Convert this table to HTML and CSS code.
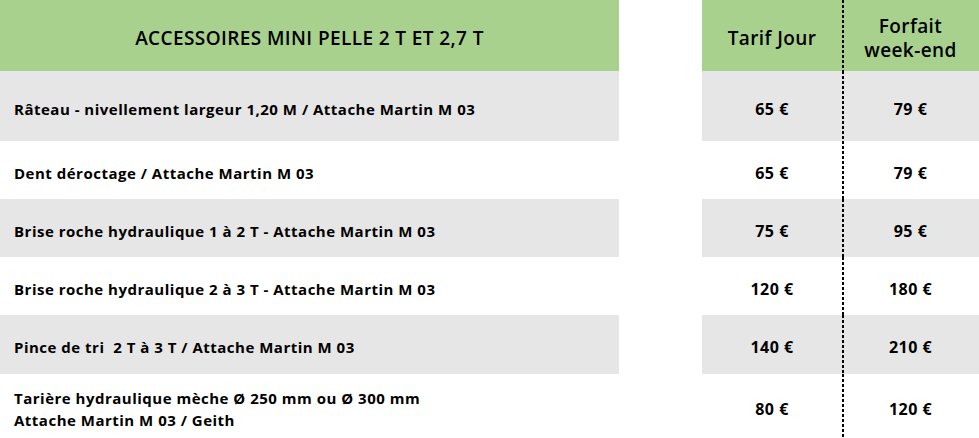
FILE: index.html
```html
<!DOCTYPE html>
<html lang="fr">
<head>
<meta charset="utf-8">
<title>Accessoires mini pelle</title>
<link rel="stylesheet" href="styles.css">
</head>
<body>
<div class="table">
  <div class="row head">
    <div class="cell name title">ACCESSOIRES MINI PELLE 2 T ET 2,7 T</div>
    <div class="spacer"></div>
    <div class="cell price">Tarif Jour</div>
    <div class="cell price wk">Forfait<br>week-end</div>
  </div>
  <div class="row gray r1">
    <div class="cell name">Râteau - nivellement largeur 1,20 M / Attache Martin M 03</div>
    <div class="spacer"></div>
    <div class="cell price">65 €</div>
    <div class="cell price wk">79 €</div>
  </div>
  <div class="row r2">
    <div class="cell name">Dent déroctage / Attache Martin M 03</div>
    <div class="spacer"></div>
    <div class="cell price">65 €</div>
    <div class="cell price wk">79 €</div>
  </div>
  <div class="row gray r3">
    <div class="cell name">Brise roche hydraulique 1 à 2 T - Attache Martin M 03</div>
    <div class="spacer"></div>
    <div class="cell price">75 €</div>
    <div class="cell price wk">95 €</div>
  </div>
  <div class="row r4">
    <div class="cell name">Brise roche hydraulique 2 à 3 T - Attache Martin M 03</div>
    <div class="spacer"></div>
    <div class="cell price">120 €</div>
    <div class="cell price wk">180 €</div>
  </div>
  <div class="row gray r5">
    <div class="cell name">Pince de tri &nbsp;2 T à 3 T / Attache Martin M 03</div>
    <div class="spacer"></div>
    <div class="cell price">140 €</div>
    <div class="cell price wk">210 €</div>
  </div>
  <div class="row r6">
    <div class="cell name">Tarière hydraulique mèche Ø 250 mm ou Ø 300 mm<br>Attache Martin M 03 / Geith</div>
    <div class="spacer"></div>
    <div class="cell price">80 €</div>
    <div class="cell price wk">120 €</div>
  </div>
</div>
</body>
</html>
```
FILE: styles.css
```css
html, body {
  margin: 0;
  padding: 0;
  background: #ffffff;
}
body {
  font-family: "Open Sans", "Liberation Sans", sans-serif;
  color: #000;
  width: 979px;
  height: 438px;
  overflow: hidden;
}
.table {
  display: flex;
  flex-direction: column;
}
.row {
  display: grid;
  grid-template-columns: 619px 83px 140px 137px;
  height: 58px;
}
.head { height: 71px; }
.r1 { height: 70px; }
.r5 { height: 59px; }
.r6 { height: 64px; }
.cell {
  display: flex;
  align-items: center;
  box-sizing: border-box;
  padding-top: 5px;
  font-weight: 700;
  font-size: 15px;
  letter-spacing: 0.5px;
  line-height: 22px;
}
.name {
  padding-left: 14px;
}
.price {
  justify-content: center;
  text-align: center;
  font-size: 16px;
}
.wk {
  background-image: repeating-linear-gradient(to bottom, #000 0 3px, transparent 3px 5px);
  background-size: 2px 100%;
  background-repeat: no-repeat;
  background-position: 0 0;
}
.head .cell {
  background-color: #a9d18e;
  font-weight: 600;
  font-size: 19px;
  letter-spacing: 0.4px;
  line-height: 24px;
  padding-top: 4px;
}
.head .title {
  justify-content: center;
  padding-left: 0;
}
.gray .cell {
  background-color: #e7e6e6;
}
```
